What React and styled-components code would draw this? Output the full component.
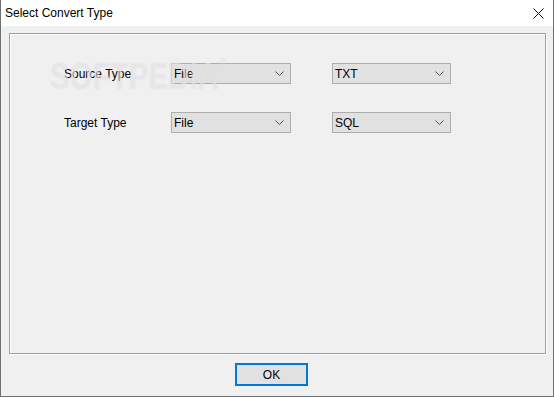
import React from "react";
import styled, { createGlobalStyle } from "styled-components";

const GlobalStyle = createGlobalStyle`
  html, body {
    margin: 0;
    padding: 0;
    background: #f0f0f0;
  }
  * {
    box-sizing: border-box;
  }
`;

const rows = [
  { label: "Source Type", kind: "File", format: "TXT" },
  { label: "Target Type", kind: "File", format: "SQL" },
];

const Chevron = () => (
  <svg width="9" height="5" viewBox="0 0 9 5">
    <path d="M0.5 0.5 L4.5 4.5 L8.5 0.5" fill="none" stroke="#505050" strokeWidth="1" />
  </svg>
);

const CloseIcon = () => (
  <svg width="11" height="11" viewBox="0 0 11 11">
    <path d="M0.5 0.5 L10.5 10.5 M10.5 0.5 L0.5 10.5" stroke="#111" strokeWidth="1" />
  </svg>
);

const Combo = ({ value, width }) => (
  <ComboBox $width={width}>
    <ComboText>{value}</ComboText>
    <Chevron />
  </ComboBox>
);

const App = () => {
  return (
    <>
      <GlobalStyle />
      <Window>
        <TitleBar>
          <Title>Select Convert Type</Title>
          <CloseButton>
            <CloseIcon />
          </CloseButton>
        </TitleBar>
        <Body>
          <Panel>
            <FormGrid>
              {rows.map((row) => (
                <React.Fragment key={row.label}>
                  <Label>{row.label}</Label>
                  <Combo value={row.kind} width={120} />
                  <Combo value={row.format} width={119} />
                </React.Fragment>
              ))}
            </FormGrid>
            <Watermark>SOFTPEDIA<Reg>®</Reg></Watermark>
          </Panel>
          <Footer>
            <OkButton>OK</OkButton>
          </Footer>
        </Body>
      </Window>
    </>
  );
};

export default App;

const Window = styled.div`
  width: 554px;
  height: 397px;
  display: flex;
  flex-direction: column;
  border: 1px solid #707070;
  border-top: none;
  background: #f0f0f0;
  font-family: "Liberation Sans", Arial, sans-serif;
  font-size: 12px;
  color: #000;
`;

const TitleBar = styled.div`
  height: 26px;
  flex-shrink: 0;
  display: flex;
  align-items: center;
  justify-content: space-between;
  background: #fff;
  padding-left: 4px;
`;

const Title = styled.span`
  font-size: 12px;
  padding-bottom: 1px;
`;

const CloseButton = styled.div`
  width: 30px;
  height: 26px;
  display: flex;
  align-items: center;
  justify-content: center;
`;

const Body = styled.div`
  flex: 1;
  display: flex;
  flex-direction: column;
  padding: 7px 7px 0 8px;
`;

const Panel = styled.div`
  position: relative;
  height: 321px;
  border: 1px solid #a0a0a0;
  box-shadow: inset 1px 1px 0 #fff, 1px 1px 0 #fff;
  padding: 29px 0 0 54px;
`;

const Watermark = styled.div`
  position: absolute;
  left: 40px;
  top: 22px;
  font-family: "Liberation Sans", Arial, sans-serif;
  font-weight: bold;
  font-size: 36px;
  transform: scaleX(0.82);
  transform-origin: left top;
  color: rgba(255, 255, 255, 0.45);
  text-shadow: 0 0 1px rgba(150, 150, 150, 0.3);
  pointer-events: none;
`;

const Reg = styled.span`
  font-size: 11px;
  vertical-align: top;
  font-weight: normal;
`;

const FormGrid = styled.div`
  display: grid;
  grid-template-columns: 107px 161px 119px;
  row-gap: 28px;
  align-items: center;
`;

const Label = styled.span`
  font-size: 12px;
  padding-top: 1px;
`;

const ComboBox = styled.div`
  width: ${(p) => p.$width}px;
  height: 21px;
  display: flex;
  align-items: center;
  justify-content: space-between;
  padding: 0 6px 0 2px;
  border: 1px solid #adadad;
  background: #e1e1e1;
`;

const ComboText = styled.span`
  font-size: 12px;
  padding-top: 1px;
`;

const Footer = styled.div`
  display: flex;
  padding: 9px 0 0 226px;
`;

const OkButton = styled.button`
  width: 73px;
  height: 23px;
  border: 2px solid #0078d7;
  background: #e1e1e1;
  font-family: "Liberation Sans", Arial, sans-serif;
  font-size: 12px;
  color: #000;
  padding: 0;
`;
